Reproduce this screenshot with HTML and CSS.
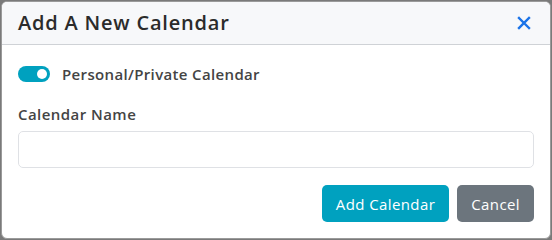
FILE: index.html
```html
<!DOCTYPE html>
<html lang="en">
<head>
    <meta charset="UTF-8">
    <meta name="viewport" content="width=device-width, initial-scale=1.0">
    <title>Add A New Calendar</title>
    <link rel="stylesheet" href="styles.css">
</head>
<body>

    <div class="modal">
        <div class="modal-header">
            <h2>Add A New Calendar</h2>
            <button class="close" type="button" aria-label="Close">
                <svg width="14" height="14" viewBox="0 0 14 14">
                    <path d="M2 2 L12 12 M12 2 L2 12" stroke="#1a73e8" stroke-width="2.4" stroke-linecap="square"/>
                </svg>
            </button>
        </div>
        <div class="modal-body">
            <label class="switch-row">
                <span class="switch"><span class="knob"></span></span>
                Personal/Private Calendar
            </label>
            <label class="field-label" for="cal-name">Calendar Name</label>
            <input id="cal-name" class="field" type="text">
            <div class="actions">
                <button class="btn btn-add" type="button">Add Calendar</button>
                <button class="btn btn-cancel" type="button">Cancel</button>
            </div>
        </div>
    </div>

</body>
</html>
```

FILE: styles.css
```css
body {
    font-family: "Open Sans", Lato, Arial, sans-serif;
    margin: 0;
    height: 240px;
    background-color: #7a7a7a;
    color: #333;
    overflow: hidden;
}
.modal {
    margin: 1px;
    height: 236px;
    background: #fff;
    border: 1px solid #9a9a9a;
    border-radius: 6px;
    overflow: hidden;
}
.modal-header {
    display: flex;
    align-items: center;
    justify-content: space-between;
    height: 42px;
    padding: 0 19px 0 16px;
    background: #f7f8fa;
    border-bottom: 1px solid #cfd2d6;
}
.modal-header h2 { margin: 0; font-size: 20px; font-weight: 600; color: #2b2b2b; letter-spacing: 0.8px; line-height: 24px; }
.close { background: none; border: 0; padding: 0; display: flex; cursor: pointer; }

.modal-body { padding: 20px 16px 0 16px; }
.switch-row { display: flex; align-items: center; gap: 12px; font-size: 15px; font-weight: 600; color: #444; line-height: 18px; letter-spacing: 0.35px; }
.switch { width: 32px; height: 16px; border-radius: 8px; background: #00a1bf; position: relative; }
.knob { position: absolute; right: 3px; top: 3px; width: 10px; height: 10px; border-radius: 50%; background: #fff; }

.field-label { display: block; margin-top: 22px; font-size: 15px; font-weight: 600; color: #444; line-height: 18px; letter-spacing: 0.45px; }
.field {
    display: block;
    box-sizing: border-box;
    width: 100%;
    height: 37px;
    margin-top: 8px;
    border: 1px solid #dfe1e5;
    border-radius: 5px;
}
.actions { display: flex; justify-content: flex-end; gap: 8px; margin-top: 17px; }
.btn {
    height: 37px;
    padding: 0 14px;
    border: 0;
    border-radius: 5px;
    font-family: inherit;
    font-size: 15px;
    font-weight: 500;
    letter-spacing: 0.4px;
    color: #fff;
}
.btn-add { background: #00a1bf; }
.btn-cancel { background: #6c757d; }
```
